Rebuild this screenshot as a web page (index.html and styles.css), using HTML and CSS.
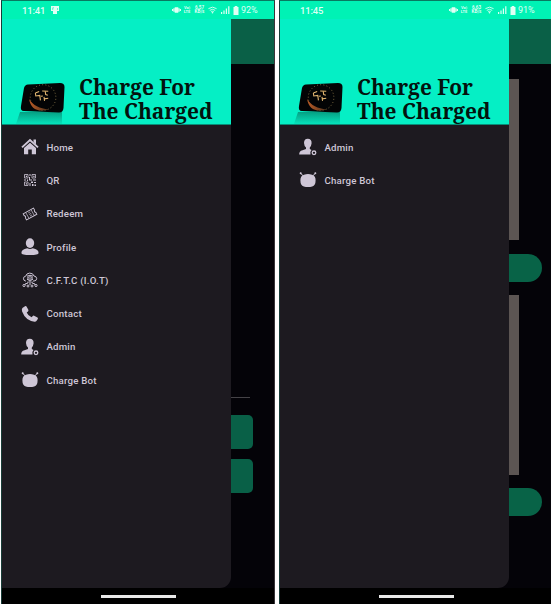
FILE: index.html
```
<!DOCTYPE html>
<html lang="en">
<head>
<meta charset="utf-8">
<title>Charge For The Charged</title>
<link rel="stylesheet" href="styles.css">
</head>
<body>
<svg class="defs" width="0" height="0" aria-hidden="true">
  <defs>
    <linearGradient id="shade" x2="0" y2="1"><stop stop-color="#06745f"/><stop offset="1" stop-color="#06dcb6"/></linearGradient>
    <linearGradient id="gold" x2="1"><stop stop-color="#b75a25"/><stop offset="1" stop-color="#49301d"/></linearGradient>
    <symbol id="device" viewBox="0 0 50 42">
      <path d="M4 29H46V41H0Z" fill="url(#shade)" opacity=".65"/>
      <path d="M12 1.5L44 0Q48.5 0 48.5 4L47.5 25Q47 29.5 43 29.5L8 28Q4 28 5 23L8 5Q9 1.5 12 1.5Z" fill="#030405"/>
      <g transform="rotate(-8 27 14)" fill="none">
        <circle cx="27" cy="14.5" r="12.8" stroke="#94804f" stroke-width=".8" stroke-dasharray="1 2.2"/>
        <path d="M13 14C13 24 20 29 31 27C22 25 16 21 13 14Z" fill="url(#gold)"/>
        <path d="M20 9L24 8M20 9V12H24V17M27 8L33 9M30 9V12L32 13M25 13H27M28 18V14M28 16H32" stroke="#dfb46f" stroke-width="1.1"/>
      </g>
    </symbol>
    <symbol id="home" viewBox="0 0 18 18"><path d="M1 9.4L9 2L17 9.4" fill="none" stroke="currentColor" stroke-width="1.9"/><path d="M12.5 1.5H15V6.5L12.5 4ZM3 10L9 4.8L15 10V16.3H10.8V11.5H7.2V16.3H3Z"/></symbol>
    <symbol id="qr" viewBox="0 0 18 18"><path d="M3.5 3.5H7V7H3.5ZM11 3.5H14.5V7H11ZM3.5 11H7V14.5H3.5Z" fill="none" stroke="currentColor" stroke-width=".8"/><path d="M4.8 4.8H6V6H4.8ZM12.3 4.8H13.5V6H12.3ZM4.8 12.3H6V13.5H4.8ZM8.5 3H9.5V5H8.5ZM8 6H9V8.5H11V9.5H8ZM3 8.5H5V9.5H3ZM6 8.5H7V10H6ZM12 8.5H15V9.5H12ZM10 10.5H12V12H10ZM13 11H15V12H13ZM8.5 12H9.5V15H8.5ZM11 13H12.5V15H11ZM13.5 13.5H15V15H13.5Z"/></symbol>
    <symbol id="redeem" viewBox="0 0 18 18"><g transform="rotate(-29 9 9)" fill="none" stroke="currentColor"><path d="M3.1 5.5H14.9V7.5Q13.4 9 14.9 10.5V12.5H3.1V10.5Q4.6 9 3.1 7.5Z" stroke-width=".9"/><path d="M6 6V12M12 6V12M8 7.2H10.3M8 9H10.3M8 10.8H10.3" stroke-width=".65"/></g></symbol>
    <symbol id="profile" viewBox="0 0 18 18"><ellipse cx="9" cy="5.1" rx="4.2" ry="4.9"/><path d="M.4 15Q.4 11.5 6.2 10.3Q9 11.8 11.8 10.3Q17.6 11.5 17.6 15Q17.6 17 9 17Q.4 17 .4 15Z"/></symbol>
    <symbol id="iot" viewBox="0 0 18 18"><g fill="none" stroke="currentColor" stroke-width="1"><path d="M5 10H4.6Q2.2 9.7 2.5 7.2Q2.8 5.3 4.7 5.2Q5.3 2.3 8.6 2.1Q12.1 2 13 5Q15.5 5.2 15.7 7.6Q15.5 10 13 10H12M6 5.2Q9 3.3 12 5.2M6.4 6.5Q9 5 11.6 6.5M6 8H12L9 10ZM9 10V14M7 10.5V12L4 13V14M11 10.5V12L14 13V14"/><circle cx="3" cy="14.5" r="1.1"/><circle cx="7" cy="15" r="1"/><circle cx="11" cy="15" r="1"/><circle cx="15" cy="14.5" r="1.1"/></g></symbol>
    <symbol id="contact" viewBox="0 0 18 18"><path d="M1.4 3L4 1.2Q5.2 .7 5.8 2L7.3 4.8Q7.7 5.8 7 6.4L5.7 7.4Q6.8 10.4 10.6 12.3L11.8 10.9Q12.4 10.4 13.1 10.8L16.5 12.4Q17.2 13 16.8 13.9L15.4 16Q14.7 16.9 13.5 16.7Q4.5 15.5 1.1 6.5Q.4 4 1.4 3Z"/></symbol>
    <symbol id="admin" viewBox="0 0 18 18"><path d="M5 5Q5 .7 8.8 .7Q12.8 .7 12.6 5.3Q12.3 8.4 10.8 9.4V11L12.5 12Q10.5 14.2 11.5 16.4H.2Q0 13.2 3.5 12.3L7 11V9.4Q5.2 8.2 5 5Z"/><circle cx="15" cy="14.8" r="1.8" fill="none" stroke="currentColor" stroke-width="1.3"/></symbol>
    <symbol id="bot" viewBox="0 0 18 18"><path d="M1.3 2.1L4 4.6M16.7 2.1L14 4.6" stroke="currentColor"/><circle cx="1.7" cy="2.2" r="1"/><circle cx="16.3" cy="2.2" r="1"/><path d="M5 3.7Q9 2.3 13 3.7Q16.8 4.8 16.6 9.5Q16.6 14.4 13.2 15.5Q9 16.5 4.8 15.5Q1.4 14.4 1.4 9.5Q1.2 4.8 5 3.7Z"/></symbol>
    <symbol id="vibrate" viewBox="0 0 10 8"><path d="M3 1H7V7H3ZM1.5 2H2.8V6H1.5ZM7.2 2H8.5V6H7.2ZM0 3H1.2V5H0ZM8.8 3H10V5H8.8Z"/></symbol>
    <symbol id="wifi" viewBox="0 0 10 8"><path d="M.5 2.5Q5-.8 9.5 2.5M2 4.4Q5 2.1 8 4.4M3.5 6Q5 4.8 6.5 6" fill="none" stroke="currentColor"/><circle cx="5" cy="7" r=".8"/></symbol>
    <symbol id="signal" viewBox="0 0 9 8"><path d="M0 6H1.2V8H0ZM2.4 4.5H3.6V8H2.4ZM4.8 2.5H6V8H4.8ZM7.2 .3H8.4V8H7.2Z"/></symbol>
    <symbol id="battery" viewBox="0 0 6 9"><path d="M1.7 0H4.3V1H5.5V9H.5V1H1.7Z"/></symbol>
    <symbol id="notice" viewBox="0 0 8 8"><path d="M0 0H8V5H6V8H2V5H0Z"/><path d="M1.7 4V1.8H3M6.5 2V4" fill="none" stroke="#00efb5" stroke-width=".6"/></symbol>
  </defs>
</svg>

<main class="screens">
  <section class="phone">
    <header class="status">
      <time>11:41</time><svg class="notice"><use href="#notice"/></svg>
      <div class="indicators"><svg class="vibrate"><use href="#vibrate"/></svg><span class="tiny">Vo)<br>LTE</span><span class="tiny rate">6.57<br>KB/s</span><svg class="wifi"><use href="#wifi"/></svg><svg class="signal"><use href="#signal"/></svg><svg class="battery"><use href="#battery"/></svg><span class="percent">92%</span></div>
    </header>
    <div class="content">
      <aside class="drawer">
        <div class="brand"><svg class="device"><use href="#device"/></svg><svg class="wordmark" role="img"><text x="0" y="19.5" textLength="116" lengthAdjust="spacingAndGlyphs">Charge For</text><text x="0" y="44" textLength="133.5" lengthAdjust="spacingAndGlyphs">The Charged</text></svg></div>
        <nav>
          <a><svg><use href="#home"/></svg>Home</a>
          <a><svg><use href="#qr"/></svg>QR</a>
          <a><svg><use href="#redeem"/></svg>Redeem</a>
          <a><svg><use href="#profile"/></svg>Profile</a>
          <a><svg><use href="#iot"/></svg>C.F.T.C (I.O.T)</a>
          <a><svg><use href="#contact"/></svg>Contact</a>
          <a><svg><use href="#admin"/></svg>Admin</a>
          <a><svg><use href="#bot"/></svg>Charge Bot</a>
        </nav>
      </aside>
      <div class="backdrop"><div class="appbar"></div><div class="divider"></div><div class="button"></div><div class="button"></div></div>
    </div>
    <footer><div class="handle"></div></footer>
  </section>
  <section class="phone">
    <header class="status">
      <time>11:45</time>
      <div class="indicators"><svg class="vibrate"><use href="#vibrate"/></svg><span class="tiny">Vo)<br>LTE</span><span class="tiny rate">6.63<br>KB/s</span><svg class="wifi"><use href="#wifi"/></svg><svg class="signal"><use href="#signal"/></svg><svg class="battery"><use href="#battery"/></svg><span class="percent">91%</span></div>
    </header>
    <div class="content">
      <aside class="drawer">
        <div class="brand"><svg class="device"><use href="#device"/></svg><svg class="wordmark" role="img"><text x="0" y="19.5" textLength="116" lengthAdjust="spacingAndGlyphs">Charge For</text><text x="0" y="44" textLength="133.5" lengthAdjust="spacingAndGlyphs">The Charged</text></svg></div>
        <nav>
          <a><svg><use href="#admin"/></svg>Admin</a>
          <a><svg><use href="#bot"/></svg>Charge Bot</a>
        </nav>
      </aside>
      <div class="backdrop"><div class="appbar"></div><div class="panel first"></div><div class="pill"></div><div class="panel second"></div><div class="pill"></div></div>
    </div>
    <footer><div class="handle"></div></footer>
  </section>
</main>
</body>
</html>
```
FILE: styles.css
```
* { box-sizing: border-box; }
body { margin: 0; background: #fff; font-family: Roboto, sans-serif; overflow: hidden; }
.defs { position: absolute; }
svg { display: block; fill: currentColor; flex: none; }
.screens { display: grid; grid-template-columns: 274px 272px; gap: 4px; padding-left: 1px; height: 604px; }
.phone { display: flex; flex-direction: column; min-width: 0; background: #040308; border-left: 1px solid #183d38; border-top: 1px solid #087a60; }
.phone:first-child { border-right: 1px solid #383539; }
.status { height: 18px; flex: none; display: flex; align-items: center; padding: 0 16px 0 20px; background: #00f2b5; color: #dffff4; font-size: 9.5px; }
time { letter-spacing: -.2px; font-weight: 500; }
.notice { width: 8px; height: 8px; margin-left: 6px; }
.indicators { display: flex; align-items: center; margin-left: auto; }
.vibrate { width: 9px; height: 8px; margin-right: 2px; }
.tiny { width: 8px; font-size: 4px; line-height: 4px; font-weight: 700; text-align: center; }
.rate { width: 11px; margin: 0 3px 0 3px; font-size: 4.6px; }
.wifi { width: 9px; height: 8px; margin-right: 4px; }
.signal { width: 9px; height: 8px; margin-right: 3px; }
.battery { width: 6px; height: 9px; margin-right: 2px; }
.percent { width: 17px; font-size: 9px; letter-spacing: -.1px; }
.content { height: 569px; display: grid; grid-template-columns: 228.5px 1fr; }
.drawer { background: #1d1a20; border-radius: 0 0 11px 0; overflow: hidden; color: #cec6d6; }
.brand { height: 106px; display: flex; padding: 56px 0 0 14px; background: #05efc5; border-bottom: 1px solid #078d77; color: #02100d; }
.device { width: 50px; height: 42px; margin-top: 8px; }
.wordmark { width: 136px; height: 49px; margin-left: 13px; overflow: visible; }
.wordmark text { font: bold 21px "Noto Serif", "Droid Serif", "DejaVu Serif Condensed", "DejaVu Serif", serif; fill: #03120e; }
nav { padding-top: 5.5px; display: flex; flex-direction: column; }
nav a { height: 33.3px; padding-left: 19px; display: flex; align-items: center; gap: 7.4px; font-size: 9.7px; font-weight: 500; letter-spacing: .22px; }
nav svg { width: 18px; height: 18px; }
.backdrop { display: flex; flex-direction: column; }
.appbar { height: 45px; background: #0a6047; flex: none; }
.divider { width: 19px; height: 1px; margin: 333px 0 16.5px; background: #454347; flex: none; }
.button { width: 22.5px; height: 34px; margin-bottom: 10.5px; border-radius: 0 5px 5px 0; background: #096047; flex: none; }
.panel { width: 10.5px; background: #5c5553; flex: none; }
.first { height: 161px; margin: 15px 0 13.5px; }
.second { height: 180px; margin: 13.5px 0 13px; }
.pill { width: 33.5px; height: 28px; border-radius: 0 14px 14px 0; background: #086347; flex: none; }
footer { flex: 1; background: #000; padding: 7px 0 0 99px; }
.handle { width: 75px; height: 3px; background: #e9e9e9; }
```
